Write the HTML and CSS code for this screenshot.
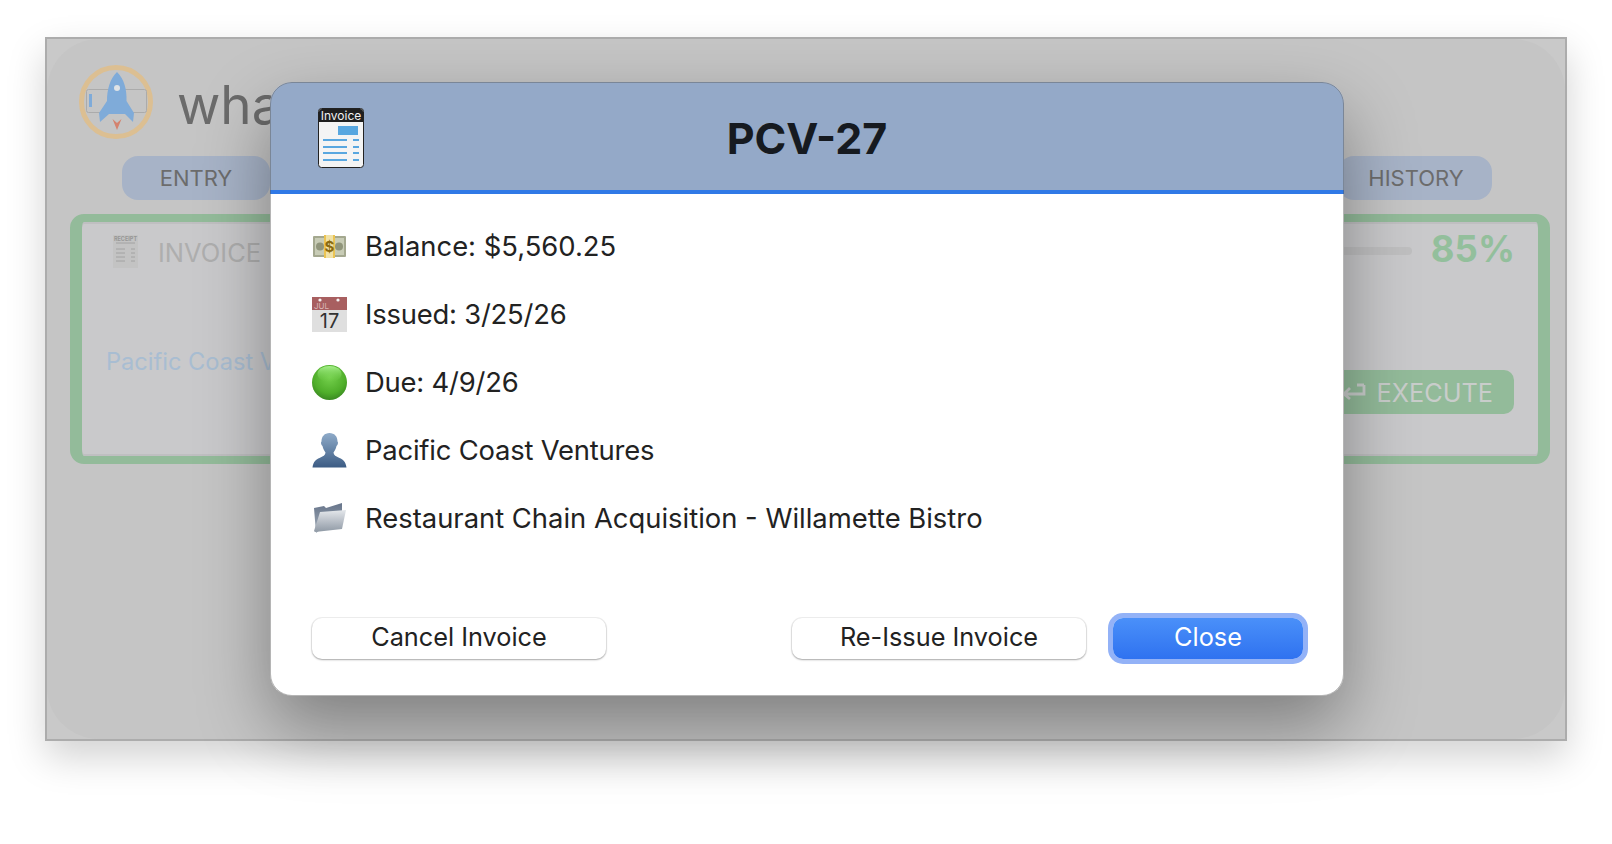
FILE: index.html
```html
<!DOCTYPE html>
<html lang="en">
<head>
<meta charset="utf-8">
<title>PCV-27</title>
<link rel="stylesheet" href="styles.css">
</head>
<body>
<div class="window">
  <div class="app">
    <header class="app-head">
      <svg class="logo" viewBox="0 0 74 74">
        <circle cx="37" cy="37" r="34.500" fill="none" stroke="#dcbf92" stroke-width="5"/>
        <rect x="7.500" y="24.500" width="60" height="23" rx="2" fill="none" stroke="#ababab" stroke-width="1"/>
        <rect x="10" y="29" width="3" height="13" fill="#7fabd9"/>
        <path d="M38 7C45 14 48 24 47.500 36L55 48L54 57L46 49H30L21 57L20 48L28 36C28 24 31 14 38 7Z" fill="#7fabd9"/>
        <circle cx="38" cy="23" r="3" fill="#dfe3e6"/>
        <path d="M33.500 54L38 65L42.500 54L38 58Z" fill="#d4826e"/>
      </svg>
      <h1 class="app-title">what</h1>
    </header>
    <nav class="tabs">
      <span class="tab tab-entry">ENTRY</span>
      <span class="tab tab-history">HISTORY</span>
    </nav>
    <section class="card">
      <div class="card-top">
        <svg class="receipt" viewBox="0 0 25 33">
          <rect width="25" height="33" fill="#c3c3c3"/>
          <text x="12.500" y="6" text-anchor="middle" class="receipt-text">RECEIPT</text>
          <path d="M3 8H22M3 14H12M18 14H22M3 18H12M18 18H22M3 22H12M18 22H22M3 26H12M18 26H22" stroke="#a2a2a2" stroke-width="1"/>
        </svg>
        <span class="card-label">INVOICE</span>
        <span class="bar"></span>
        <span class="percent">85%</span>
      </div>
      <div class="card-bottom">
        <span class="client">Pacific Coast Ventures</span>
        <span class="execute">
          <svg class="return" viewBox="0 0 24 18"><path d="M22 2H15M22 2V11H3M8 5L2 11L8 16" fill="none" stroke="#c9cdcb" stroke-width="2.800"/></svg>
          EXECUTE
        </span>
      </div>
    </section>
  </div>

  <div class="modal">
    <div class="modal-head">
      <svg class="doc-icon" viewBox="0 0 46 60">
        <rect x=".5" y=".5" width="45" height="59" rx="3" fill="#f4f4f4" stroke="#222"/>
        <path d="M1 14V4A3 3 0 0 1 4 1H42A3 3 0 0 1 45 4V14Z" fill="#1f1f1f"/>
        <text x="23" y="11.500" text-anchor="middle" class="doc-text">Invoice</text>
        <rect x="20" y="18" width="20" height="9" fill="#58a7e0"/>
        <path d="M5 32H29M35 32H41M5 39H29M35 39H41M5 45H29M35 45H41M5 52H29M35 52H41" stroke="#58a7e0" stroke-width="2"/>
      </svg>
      <h2 class="modal-title">PCV-27</h2>
    </div>
    <div class="modal-body">
      <ul class="facts">
        <li class="fact">
          <svg class="fact-icon" viewBox="0 0 35 35">
            <rect x="1" y="7" width="33" height="21" rx="1" fill="#a4a88f"/>
            <rect x="3" y="9" width="29" height="17" fill="#c8ccb6"/>
            <circle cx="8" cy="17.500" r="4" fill="#90957b"/>
            <circle cx="27" cy="17.500" r="4" fill="#90957b"/>
            <rect x="12" y="6" width="11" height="23" fill="#ecc452"/>
            <rect x="14" y="6" width="7" height="23" fill="#f0e2a8"/>
            <text x="17.500" y="22.500" text-anchor="middle" class="money-text">$</text>
          </svg>
          <span>Balance: $5,560.25</span>
        </li>
        <li class="fact">
          <svg class="fact-icon" viewBox="0 0 35 35">
            <rect width="35" height="35" fill="#dfdfdf"/>
            <rect width="35" height="13" fill="#a85f60"/>
            <circle cx="8" cy="3" r="1.600" fill="#f2f2f2"/>
            <circle cx="26" cy="3" r="1.600" fill="#f2f2f2"/>
            <text x="2" y="11.500" class="cal-month">JUL</text>
            <text x="17.500" y="31" text-anchor="middle" class="cal-day">17</text>
          </svg>
          <span class="tight">Issued: 3/25/26</span>
        </li>
        <li class="fact">
          <svg class="fact-icon" viewBox="0 0 35 35">
            <defs>
              <radialGradient id="dot" cx=".5" cy=".35" r=".7">
                <stop offset="0" stop-color="#74d04c"/>
                <stop offset=".65" stop-color="#4fae2a"/>
                <stop offset="1" stop-color="#35801f"/>
              </radialGradient>
              <linearGradient id="dotshine" x1="0" y1="0" x2="0" y2="1">
                <stop offset="0" stop-color="#a6f08c"/>
                <stop offset="1" stop-color="#74d04c" stop-opacity="0"/>
              </linearGradient>
              <linearGradient id="person" x1="0" y1="0" x2="0" y2="1">
                <stop offset="0" stop-color="#8fabc9"/>
                <stop offset="1" stop-color="#3c5c84"/>
              </linearGradient>
              <linearGradient id="folderback" x1="0" y1="0" x2="0" y2="1">
                <stop offset="0" stop-color="#66748a"/>
                <stop offset="1" stop-color="#a4aeb9"/>
              </linearGradient>
              <linearGradient id="folderfront" x1="0" y1="0" x2="0" y2="1">
                <stop offset="0" stop-color="#e4e7eb"/>
                <stop offset="1" stop-color="#8f99a5"/>
              </linearGradient>
            </defs>
            <circle cx="17.500" cy="17.500" r="17.500" fill="url(#dot)"/>
            <ellipse cx="17.500" cy="9" rx="12" ry="8" fill="url(#dotshine)"/>
          </svg>
          <span class="tight">Due: 4/9/26</span>
        </li>
        <li class="fact">
          <svg class="fact-icon" viewBox="0 0 35 35">
            <path d="M17.500 0C22.500 0 25.500 3.500 25.500 8.500C26.500 9 26 12 24.500 13C24 16 22.500 18 21.500 19.500C21.500 22 24 23.500 27.500 25C31 26.500 33.500 28 34.500 34.500H.5C1.500 28 4 26.500 7.500 25C11 23.500 13.500 22 13.500 19.500C12.500 18 11 16 10.500 13C9 12 8.500 9 9.500 8.500C9.500 3.500 12.500 0 17.500 0Z" fill="url(#person)"/>
          </svg>
          <span class="tight">Pacific Coast Ventures</span>
        </li>
        <li class="fact">
          <svg class="fact-icon" viewBox="0 0 35 35">
            <path d="M2 7L12 5L14 7L30 2V12L4 32Z" fill="url(#folderback)"/>
            <path d="M8 11L34 9L30 28L3 31L2 30Z" fill="url(#folderfront)"/>
          </svg>
          <span>Restaurant Chain Acquisition - Willamette Bistro</span>
        </li>
      </ul>
      <footer class="actions">
        <button class="btn btn-cancel" type="button">Cancel Invoice</button>
        <button class="btn" type="button">Re-Issue Invoice</button>
        <button class="btn btn-primary" type="button">Close</button>
      </footer>
    </div>
  </div>
</div>
</body>
</html>
```

FILE: styles.css
```css
* { box-sizing: border-box; }
html, body { margin: 0; height: 100%; overflow: hidden; }
body {
  padding: 37px 45px 0;
  background: #fff;
  font-family: Inter, "Liberation Sans", sans-serif;
}
.window {
  position: relative;
  width: 1522px;
  height: 704px;
  background: #c9c9c9;
  border: 2px solid #acacac;
  box-shadow: 0 16px 36px rgba(0, 0, 0, .18);
}
.app {
  height: 100%;
  padding: 26px 15px 0 23px;
  background: #c5c5c5;
  border-radius: 52px;
}
.app-head {
  display: flex;
  align-items: center;
  gap: 24px;
  margin-left: 9px;
}
.logo { width: 74px; height: 74px; flex: none; }
.app-title {
  margin: 0;
  padding-top: 3px;
  font-size: 53px;
  font-weight: 400;
  line-height: 74px;
  height: 74px;
  color: #6b6b6b;
}
.tabs {
  display: flex;
  justify-content: space-between;
  margin: 17px 58px 14px 52px;
}
.tab {
  display: flex;
  align-items: center;
  justify-content: center;
  height: 44px;
  background: #a7b3c7;
  border-radius: 16px;
  font-size: 22px;
  color: #6c6c6c;
}
.tab-entry { width: 148px; }
.tab-history { width: 154px; padding-left: 2px; }
.card {
  height: 250px;
  padding: 13px 23px 0 24px;
  background: #c9c9cb;
  border-style: solid;
  border-color: #93bb9a;
  border-width: 8px 12px;
  border-radius: 14px;
  box-shadow: inset 0 2px 0 #bfbfc1, inset 0 -2px 0 #bfbfc1;
}
.card-top { display: flex; align-items: center; height: 33px; }
.receipt { width: 25px; height: 33px; margin-left: 7px; flex: none; }
.receipt-text { font-size: 5.500px; font-weight: 700; fill: #969696; }
.card-label { margin: 2px 0 0 20px; font-size: 25.500px; color: #aeaeae; }
.bar {
  flex: 1;
  height: 8px;
  margin: -2px 19px 0 60px;
  background: #bfbfc0;
  border-radius: 4px;
}
.percent {
  margin-top: -6px;
  font-size: 36.500px;
  font-weight: 700;
  color: #93bf9c;
}
.card-bottom {
  display: flex;
  justify-content: space-between;
  align-items: flex-start;
  margin: 79px 1px 0 0;
}
.client { font-size: 23.600px; line-height: 30px; color: #a8bdd2; }
.execute {
  display: flex;
  align-items: center;
  gap: 10px;
  height: 44px;
  margin-top: 23px;
  padding: 0 21px 0 35px;
  background: #93bb9a;
  border-radius: 10px;
  font-size: 25.300px;
  color: #c9cdcb;
}
.return { width: 24px; height: 18px; }
.modal {
  position: absolute;
  left: 223px;
  top: 43px;
  display: flex;
  flex-direction: column;
  width: 1074px;
  height: 614px;
  background: #fff;
  border-radius: 22px;
  overflow: hidden;
  outline: 1px solid rgba(90, 90, 90, .45);
  outline-offset: -1px;
}
.window::after {
  content: "";
  position: absolute;
  left: 223px;
  top: 43px;
  width: 1074px;
  height: 614px;
  border-radius: 22px;
  box-shadow: 0 30px 70px rgba(0, 0, 0, .36);
  pointer-events: none;
}
.modal-head {
  display: grid;
  grid-template-columns: 1fr auto 1fr;
  align-items: center;
  flex: none;
  height: 112px;
  padding: 4px 0 0 48px;
  background: #94a9c8;
  border-bottom: 4px solid #3079e6;
}
.doc-icon { width: 46px; height: 60px; }
.doc-text { font-size: 12px; fill: #f2f2f2; }
.modal-title {
  margin: 0 0 0 -48px;
  font-size: 43px;
  font-weight: 700;
  color: #161a20;
}
.modal-body {
  flex: 1;
  display: flex;
  flex-direction: column;
  padding: 18px 41px 37px 42px;
}
.facts { margin: 0; padding: 0; list-style: none; }
.fact {
  display: flex;
  align-items: center;
  gap: 18px;
  height: 68px;
  font-size: 27.400px;
  color: #222;
}
.tight { letter-spacing: -.2px; }
.fact-icon { width: 35px; height: 35px; flex: none; }
.money-text { font-size: 15px; font-weight: 700; fill: #8a6a10; }
.cal-month { font-size: 8px; fill: #d9b5b5; }
.cal-day { font-size: 20px; fill: #333; }
.actions {
  display: flex;
  align-items: center;
  gap: 27px;
  margin-top: auto;
}
.btn {
  width: 294px;
  height: 41px;
  padding: 0 0 4px;
  background: #fff;
  border: 0;
  border-radius: 10px;
  box-shadow: 0 0 0 1px rgba(0, 0, 0, .06), 0 1px 2px rgba(0, 0, 0, .3);
  font: 400 25.300px Inter, "Liberation Sans", sans-serif;
  color: #222;
}
.btn-cancel { margin-right: auto; }
.btn-primary {
  width: 190px;
  background: linear-gradient(#4a90f9, #2f72f0);
  box-shadow: 0 0 0 5px #93b2f7;
  color: #fff;
}
```
